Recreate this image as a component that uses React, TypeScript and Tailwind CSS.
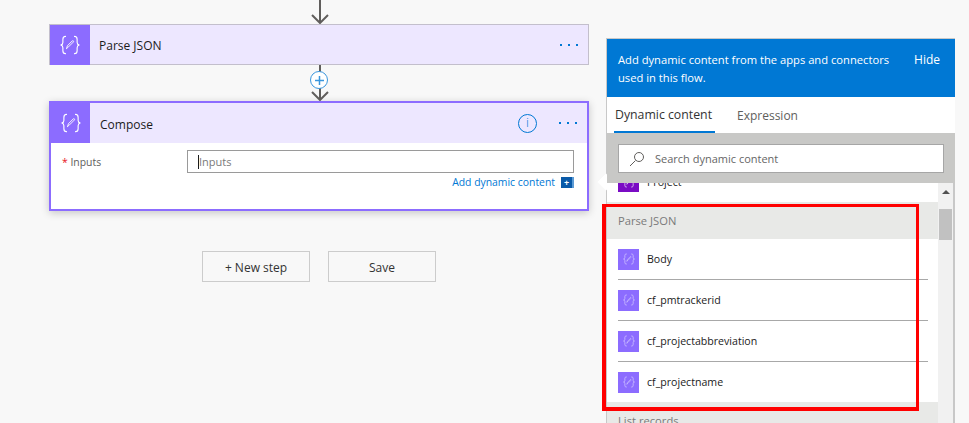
const font = { fontFamily: '"Open Sans", "Noto Sans", sans-serif' };

function ActionIcon({ size }: { size: number }) {
  return (
    <svg width={size} height={size} viewBox="0 0 32 32" fill="none" stroke="white" strokeLinecap="round">
      <path d="M10 4.5c-3 0-3.5 1.5-3.5 4v4c0 2-.8 3-3 3.500 2.200.5 3 1.500 3 3.500v4c0 2.500.5 4 3.500 4" strokeWidth="1.500" />
      <path d="M22 4.500c3 0 3.500 1.500 3.500 4v4c0 2 .8 3 3 3.500-2.200.5-3 1.500-3 3.500v4c0 2.500-.5 4-3.500 4" strokeWidth="1.500" />
      <path d="M11.500 20.500l1-3.500 6.500-6.500c1-1 2.500.5 1.500 1.500l-6.500 6.500-2.500 2z" strokeWidth="1.200" strokeLinejoin="round" />
    </svg>
  );
}

function Arrow({ height }: { height: number }) {
  return (
    <svg width="18" height={height} viewBox={`0 0 18 ${height}`} fill="none" stroke="#605e5c" strokeWidth="2" className="block">
      <path d={`M9 0V${height - 1}`} />
      <path d={`M1 ${height - 9}l8 8 8-8`} />
    </svg>
  );
}

function Dots() {
  return (
    <div className="flex gap-[6px]">
      <span className="h-[2px] w-[2px] bg-[#0078d4]" />
      <span className="h-[2px] w-[2px] bg-[#0078d4]" />
      <span className="h-[2px] w-[2px] bg-[#0078d4]" />
    </div>
  );
}

function TokenRow({ label, last }: { label: string; last?: boolean }) {
  return (
    <div className={(last ? "h-[40px]" : "h-[41px]") + " pl-[11px] pr-[10px]"}>
      <div className={"flex h-full items-center gap-[8px] " + (last ? "" : "border-b border-[#a8a8a8]")}>
        <div className="flex h-[21px] w-[21px] items-center justify-center bg-[#8c6cff]">
          <div className="opacity-70">
            <ActionIcon size={14} />
          </div>
        </div>
        <span className="mt-[2px] text-[10.6px] text-[#1b1b1b]">{label}</span>
      </div>
    </div>
  );
}

export default function App() {
  return (
    <div className="relative flex h-[423px] w-[969px] overflow-hidden bg-[#f8f8f8]" style={font}>
      {/* flow canvas */}
      <div className="flex w-[606px] flex-col pl-[49px]">
        <div className="flex w-[540px] justify-center pl-[2px]">
          <Arrow height={24} />
        </div>
        <div className="flex h-[41px] w-[540px] items-center border border-[#c3bfcc] bg-[#ede7ff]">
          <div className="flex h-[40px] w-[40px] items-center justify-center bg-[#8c6cff]">
            <ActionIcon size={24} />
          </div>
          <span className="ml-[9px] mt-[2px] text-[12px] text-[#1b1b1b]">Parse JSON</span>
          <div className="ml-auto mr-[10px]">
            <Dots />
          </div>
        </div>
        <div className="relative flex h-[36px] w-[540px] justify-center pl-[2px]">
          <Arrow height={36} />
          <div className="absolute left-[261px] top-[6px] flex h-[18px] w-[18px] items-center justify-center rounded-full border border-[#3a96dd] bg-white">
            <svg width="9" height="9" viewBox="0 0 9 9" stroke="#3a96dd" strokeWidth="1.500">
              <path d="M4.500 0v9M0 4.500h9" />
            </svg>
          </div>
        </div>
        <div className="h-[110px] w-[540px] border-2 border-[#8c6cff] bg-white shadow-[0_2px_8px_rgba(0,0,0,0.2)]">
          <div className="flex h-[40px] items-center bg-[#ede7ff]">
            <div className="flex h-[40px] w-[39px] items-center justify-center bg-[#8c6cff]">
              <ActionIcon size={24} />
            </div>
            <span className="ml-[10px] mt-[3px] text-[12px] text-[#1b1b1b]">Compose</span>
            <div className="ml-auto mr-[10px] flex items-center gap-[22px]">
              <div className="flex h-[19px] w-[19px] items-center justify-center rounded-full border border-[#0078d4] text-[13px] font-light text-[#0078d4]">
                i
              </div>
              <Dots />
            </div>
          </div>
          <div className="flex pl-[11px] pr-[13px] pt-[7px]">
            <div className="w-[125px] pt-[5px] text-[10.4px] text-[#605e5c]">
              <span className="text-[#e81123]">* </span>Inputs
            </div>
            <div className="flex-1">
              <div className="flex h-[23px] items-center border border-[#9a9a9a] bg-white pl-[10px] text-[11px] text-[#7a7a7a]">
                <span className="h-[14px] w-px bg-[#1b1b1b]" />
                <span className="mt-[1px]">Inputs</span>
              </div>
              <div className="mt-[2px] flex items-center justify-end gap-[6px] text-[10.4px] text-[#0078d4]">
                Add dynamic content
                <span className="flex h-[11px] w-[13px] items-center justify-center border-r-2 border-[#5b9bd5] bg-[#0a5aa8] text-[9px] font-bold leading-none text-white">
                  +
                </span>
              </div>
            </div>
          </div>
        </div>
        <div className="mt-[40px] flex w-[540px] justify-center gap-[18px]">
          <button className="h-[31px] w-[108px] border border-[#cccccc] pt-[2px] text-[12px] text-[#333333]">+ New step</button>
          <button className="h-[31px] w-[108px] border border-[#cccccc] pt-[2px] text-[12px] text-[#333333]">Save</button>
        </div>
      </div>

      {/* dynamic content panel */}
      <div className="relative mt-[38px] flex h-[385px] w-[349px] flex-col border-l border-t border-[#c8c8c8] bg-white">
        <div className="absolute left-[-7px] top-[137px] h-[12px] w-[12px] rotate-45 bg-white" />
        <div className="flex h-[58px] bg-[#0078d4] pl-[11px] pr-[15px] pt-[12px] text-[11.2px] leading-[18px] text-white">
          <div className="w-[280px]">Add dynamic content from the apps and connectors used in this flow.</div>
          <div className="ml-auto text-[12px]">Hide</div>
        </div>
        <div className="flex h-[36px] gap-[22px] pl-[7px] text-[12px] text-[#333333]">
          <div className="flex h-full w-[101px] items-center justify-center border-b-2 border-[#0078d4] pr-[2px] pt-[2px] text-[12.3px]">Dynamic content</div>
          <div className="flex h-full items-center pt-[1px] text-[#605e5c]">Expression</div>
        </div>
        <div className="relative z-10 h-[50px] bg-[#c8c8c6] px-[11px] pt-[11px]">
          <div className="flex h-[29px] items-center border border-[#a6a6a6] bg-white pl-[10px] text-[11px] text-[#666666]">
            <svg width="16" height="16" viewBox="0 0 16 16" fill="none" stroke="#605e5c">
              <circle cx="10" cy="6" r="4.500" />
              <path d="M6.500 9.500L1 15" />
            </svg>
            <span className="ml-[10px] mt-[1px]">Search dynamic content</span>
          </div>
        </div>
        <div className="flex min-h-0 flex-1 border-r-2 border-[#c8c8c8]">
          <div className="w-[331px] shrink-0 overflow-hidden">
            <div className="-mt-[22px]">
              <div className="flex h-[41px] items-center gap-[8px] pl-[11px]">
                <div className="flex h-[21px] w-[21px] items-center justify-center bg-[#7a0cc4]">
                  <ActionIcon size={14} />
                </div>
                <span className="mt-[2px] text-[10.6px] text-[#1b1b1b]">Project</span>
              </div>
              <div className="flex h-[37px] items-center bg-[#e8e9e7] pl-[11px] pt-[2px] text-[11.2px] text-[#7a7a7a]">Parse JSON</div>
              <TokenRow label="Body" />
              <TokenRow label="cf_pmtrackerid" />
              <TokenRow label="cf_projectabbreviation" />
              <TokenRow label="cf_projectname" last />
              <div className="flex h-[37px] items-center bg-[#e8e9e7] pl-[11px] pt-[2px] text-[11.2px] text-[#7a7a7a]">List records</div>
            </div>
          </div>
          <div className="flex flex-1 flex-col items-center bg-[#f1f1f1] pt-[7px]">
            <div className="h-0 w-0 border-x-[4px] border-b-[4px] border-x-transparent border-b-[#505050]" />
            <div className="mt-[15px] h-[31px] w-[13px] bg-[#c1c1c1]" />
          </div>
        </div>
      </div>

      {/* red highlight drawn over the screenshot */}
      <div className="absolute left-[602px] top-[204px] h-[207px] w-[317px] border-[3px] border-b-[4px] border-l-[4px] border-[#ff0000]" />
    </div>
  );
}
